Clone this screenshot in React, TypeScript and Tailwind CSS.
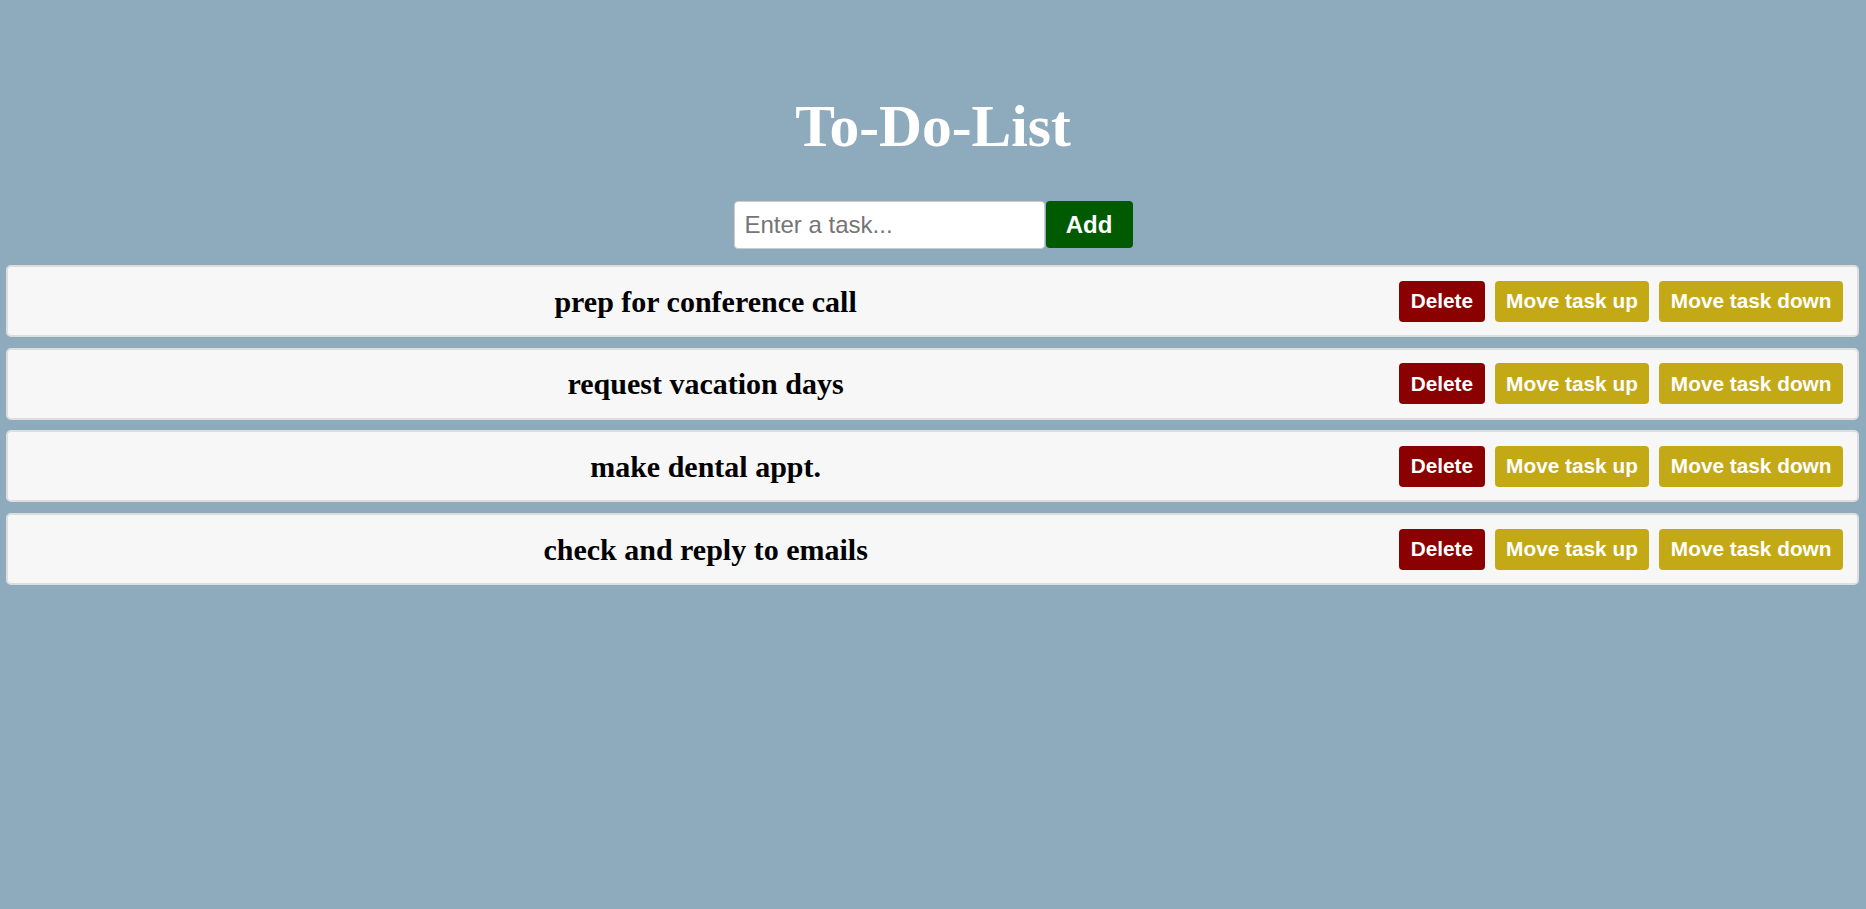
import React, { useState } from "react";

const initial = [
  "prep for conference call",
  "request vacation days",
  "make dental appt.",
  "check and reply to emails",
];

export default function App() {
  const [tasks, setTasks] = useState<string[]>(initial);
  const [text, setText] = useState("");

  const add = () => {
    if (text.trim()) {
      setTasks([...tasks, text.trim()]);
      setText("");
    }
  };
  const del = (i: number) => setTasks(tasks.filter((_, j) => j !== i));
  const up = (i: number) => {
    if (i === 0) return;
    const t = [...tasks];
    [t[i - 1], t[i]] = [t[i], t[i - 1]];
    setTasks(t);
  };
  const down = (i: number) => {
    if (i === tasks.length - 1) return;
    const t = [...tasks];
    [t[i + 1], t[i]] = [t[i], t[i + 1]];
    setTasks(t);
  };

  return (
    <div className="min-h-[909px] w-full bg-[#8eaabd] pt-[94px] font-['Liberation_Sans',Arial,sans-serif]">
      <h1 className="text-center text-[59.5px] font-bold leading-[64px] text-white font-['Liberation_Serif','Times_New_Roman',serif]">
        To-Do-List
      </h1>
      <div className="mt-[43px] flex justify-center">
        <input
          value={text}
          onChange={(e) => setText(e.target.value)}
          placeholder="Enter a task..."
          className="h-[48px] w-[311px] rounded-[4px] border border-[#cccccc] bg-white px-[10px] text-[24px] text-black outline-none placeholder:text-[#757575] font-['Liberation_Sans',Arial,sans-serif]"
        />
        <button
          onClick={add}
          className="ml-[1px] h-[47px] w-[87px] rounded-[4px] bg-[#005a00] text-[24px] font-bold text-white font-['Liberation_Sans',Arial,sans-serif]"
        >
          Add
        </button>
      </div>
      <ol className="mt-[16px] flex flex-col gap-[10.7px]">
        {tasks.map((t, i) => (
          <li
            key={t + i}
            className="ml-[6px] mr-[7px] flex h-[72px] items-center rounded-[5px] border-2 border-[#dddddd] bg-[#f7f7f7] pr-[14px]"
          >
            <span className="flex-1 pl-[4px] text-center text-[30px] font-bold text-black font-['Liberation_Serif','Times_New_Roman',serif]">
              {t}
            </span>
            <div className="flex gap-[10px]">
              <button
                onClick={() => del(i)}
                className="rounded-[4px] bg-[#8b0000] px-[11.5px] py-[8.5px] text-[20.8px] font-bold leading-[24px] text-white"
              >
                Delete
              </button>
              <button
                onClick={() => up(i)}
                className="rounded-[4px] bg-[#c4a916] px-[11.5px] py-[8.5px] text-[20.8px] font-bold leading-[24px] text-white"
              >
                Move task up
              </button>
              <button
                onClick={() => down(i)}
                className="rounded-[4px] bg-[#c4a916] px-[11.5px] py-[8.5px] text-[20.8px] font-bold leading-[24px] text-white"
              >
                Move task down
              </button>
            </div>
          </li>
        ))}
      </ol>
    </div>
  );
}
